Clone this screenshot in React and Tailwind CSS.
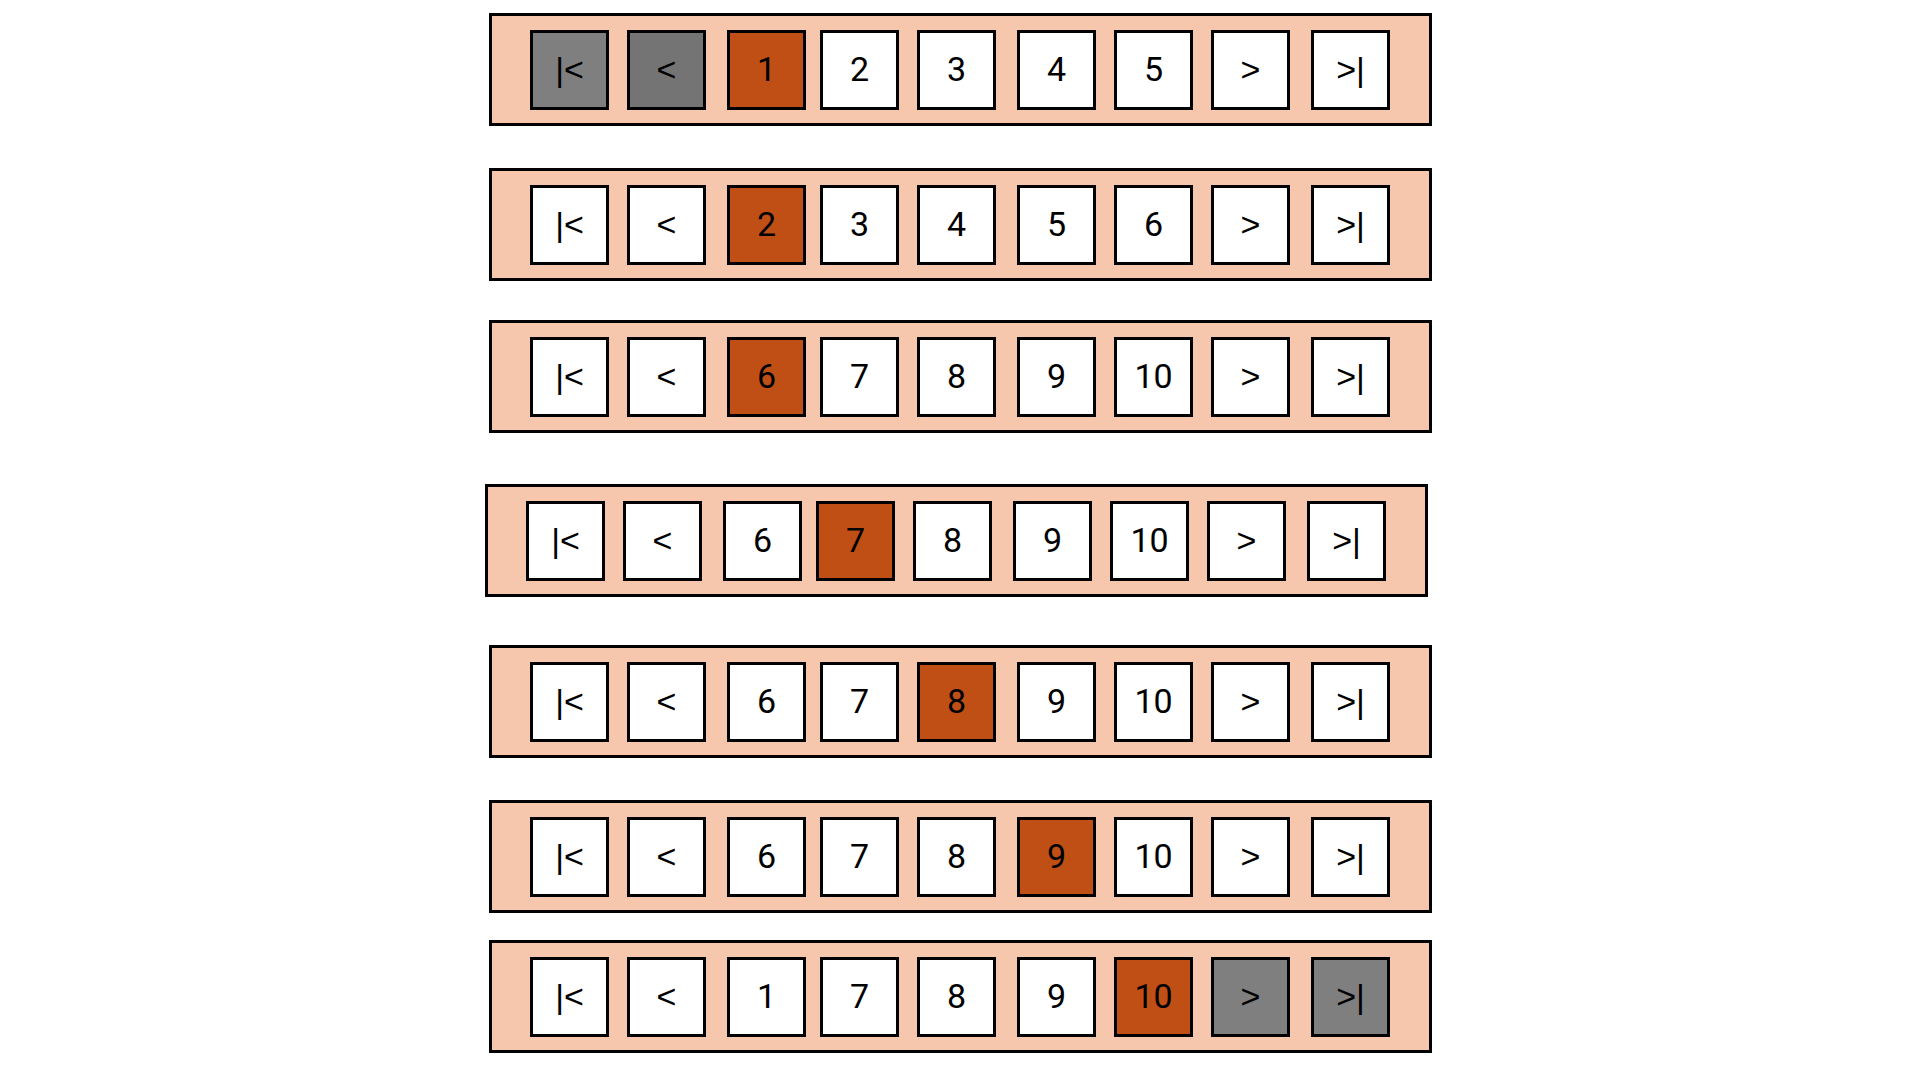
const pagers = [
  { pages: [1, 2, 3, 4, 5], current: 1, atStart: true, spacing: "" },
  { pages: [2, 3, 4, 5, 6], current: 2, spacing: "mt-[42px]" },
  { pages: [6, 7, 8, 9, 10], current: 6, spacing: "mt-[39px]" },
  { pages: [6, 7, 8, 9, 10], current: 7, spacing: "mt-[51px] mr-2" },
  { pages: [6, 7, 8, 9, 10], current: 8, spacing: "mt-12" },
  { pages: [6, 7, 8, 9, 10], current: 9, spacing: "mt-[42px]" },
  { pages: [1, 7, 8, 9, 10], current: 10, atEnd: true, spacing: "mt-[27px]" },
];

const pageSpacing = ["ml-[21px]", "ml-3.5", "ml-[18px]", "ml-[21px]", "ml-[18px]"];

const arrowFont = "font-['Liberation_Sans',Arial,sans-serif]";
const digitFont = "font-['Roboto',sans-serif]";

function Cell({
  children,
  label,
  current,
  disabled,
  disabledTone = "bg-[#7f7f7f]",
  font = arrowFont,
  spacing = "",
}) {
  const tone = disabled ? disabledTone : current ? "bg-[#c04f15]" : "bg-white";
  return (
    <button
      type="button"
      aria-label={label}
      aria-current={current ? "page" : undefined}
      disabled={disabled}
      className={`flex h-20 w-[79px] shrink-0 items-center justify-center border-3 border-black pb-0.5 text-[34px] leading-10 text-black ${font} ${tone} ${spacing}`}
    >
      {children}
    </button>
  );
}

function Pager({ pages, current, atStart = false, atEnd = false, spacing, name }) {
  return (
    <nav
      aria-label={name}
      className={`flex max-w-full flex-wrap border-3 border-black bg-[#f6c6ad] pt-3.5 pr-[39px] pb-[13px] pl-[38px] ${spacing}`}
    >
      <Cell label="First page" disabled={atStart}>{"|<"}</Cell>
      <Cell label="Previous page" disabled={atStart} disabledTone="bg-[#747474]" spacing="ml-[18px]">
        {"<"}
      </Cell>
      {pages.map((page, i) => (
        <Cell
          key={page}
          label={`Page ${page}`}
          current={page === current}
          font={digitFont}
          spacing={pageSpacing[i]}
        >
          {page}
        </Cell>
      ))}
      <Cell label="Next page" disabled={atEnd} spacing="ml-[18px]">{">"}</Cell>
      <Cell label="Last page" disabled={atEnd} spacing="ml-[21px]">{">|"}</Cell>
    </nav>
  );
}

export default function App() {
  return (
    <main className="flex min-h-screen flex-col items-center bg-white pt-[13px] pl-0.5">
      {pagers.map((pager, i) => (
        <Pager key={i} name={`Pagination ${i + 1}`} {...pager} />
      ))}
    </main>
  );
}
